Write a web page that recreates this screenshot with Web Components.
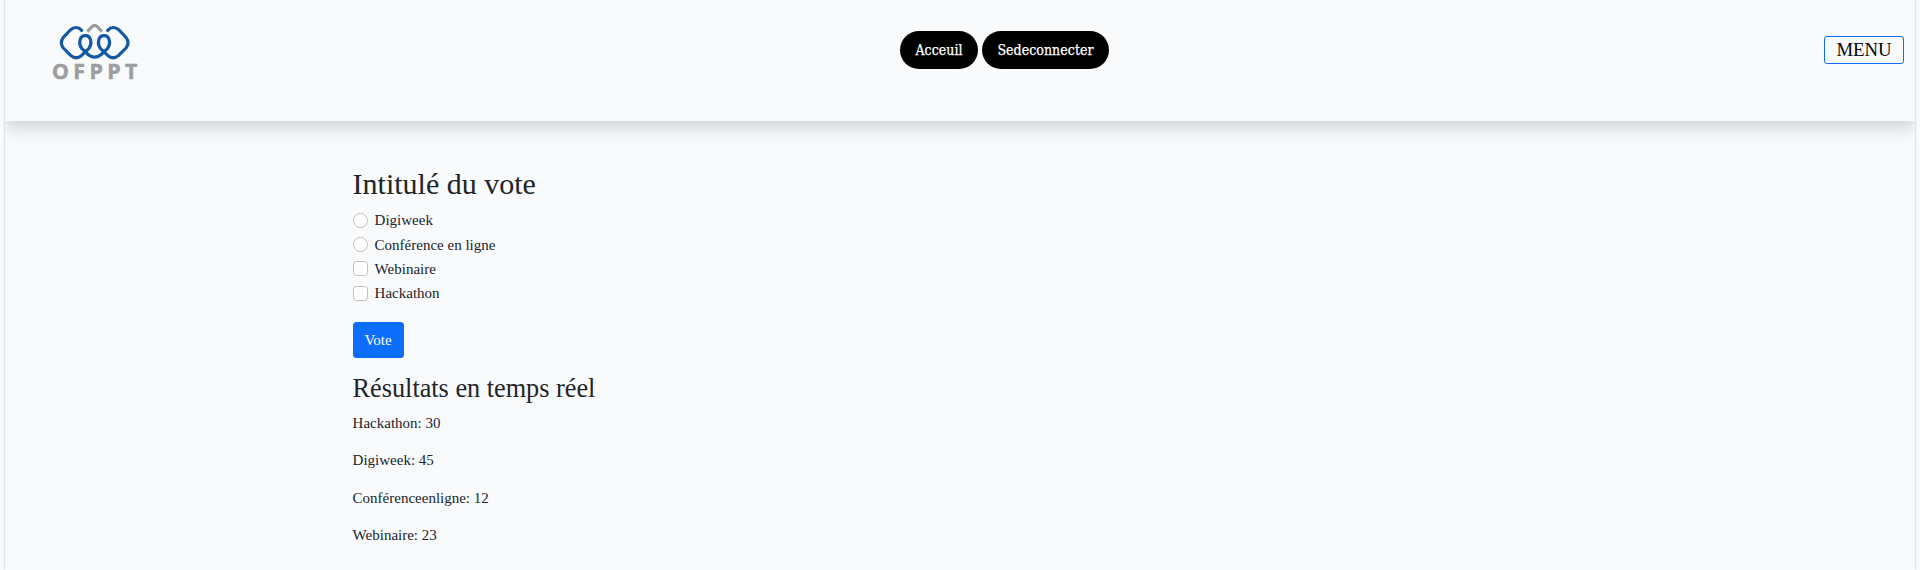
<!DOCTYPE html>
<html lang="fr">
<head>
<meta charset="utf-8">
<title>Vote</title>
<style>
html{background:#f8fafb}
body{margin:0 5px;height:570px;overflow:hidden;font:15px/24px "Liberation Serif",serif;color:#212529;background:#f8fafc;box-shadow:0 0 2px rgba(0,0,0,.3)}
</style>
</head>
<body>
<vote-page></vote-page>
<script>
const define=(name,html)=>{
  const t=document.createElement('template');t.innerHTML=html;
  customElements.define(name,class extends HTMLElement{
    constructor(){super();this.attachShadow({mode:'open'}).append(t.content.cloneNode(true));}
  });
};
define('ofppt-logo',`<style>:host{display:block;width:90px;height:64px}svg{display:block}text{font:700 64px "Open Sans",sans-serif;fill:#9c9d9f;stroke:#9c9d9f;stroke-width:1.5}</style>
<svg width="90" height="64" viewBox="150 60 270 192" fill="none" stroke-linecap="round" stroke-linejoin="round" stroke-width="9.5">
<path stroke="#9c9d9f" stroke-linecap="butt" d="M262 95L276 80Q284 72 292 80L306 95"/>
<path stroke="#1458a3" d="M245 91C235 80 221 81 211 90L190 112Q178 128 190 144L212 166Q228 180 244 167L267 145C277 132 274 107 256 107C238 107 235 132 245 145L266 165Q284 178 302 165L323 145C333 132 330 107 312 107C294 107 291 132 301 145L324 167Q340 180 356 166L378 144Q390 128 378 112L357 90C347 81 333 80 323 91"/>
<text x="156" y="238" textLength="256" lengthAdjust="spacing">OFPPT</text></svg>`);
define('nav-pill',`<style>:host{display:block}button{display:block;box-sizing:border-box;height:38px;padding:0;border:0;border-radius:19px;background:#000;color:#fff;font:14px/38px "DejaVu Serif Condensed","DejaVu Serif",serif;font-stretch:condensed;letter-spacing:.05px;-webkit-text-stroke:.25px #fff;width:100%;white-space:nowrap}</style><button><slot></slot></button>`);
define('menu-button',`<style>:host{display:block}button{display:block;box-sizing:border-box;width:80px;height:28px;padding:0;border:1px solid #0d6efd;border-radius:3px;background:transparent;color:#000;font:18.75px/26px "Liberation Serif",serif}</style><button><slot></slot></button>`);
define('site-header',`<style>:host{display:grid;grid-template-columns:850px auto 1fr;box-sizing:border-box;height:121px;padding:20px 11px 0 45px;background:#f8fafc;box-shadow:0 8px 16px rgba(0,0,0,.15)}
nav{display:flex;gap:4px;padding-top:11px}menu-button{justify-self:end;margin-top:16px}.a{width:78px}.b{width:127px}</style>
<ofppt-logo></ofppt-logo><nav><nav-pill class="a">Acceuil</nav-pill><nav-pill class="b">Sedeconnecter</nav-pill></nav><menu-button>MENU</menu-button>`);
customElements.define('vote-option',class extends HTMLElement{
  constructor(){super();const type=this.getAttribute('type');
  this.attachShadow({mode:'open'}).innerHTML=`<style>:host{display:block;height:24.4px}label{display:flex;align-items:center;gap:7px;height:24px}input{appearance:none;box-sizing:border-box;width:15px;height:15px;margin:0;border:1px solid #bfbfbf;background:#fff;border-radius:${type==='radio'?'50%':'3.5px'}}</style><label><input type="${type}" name="vote"><span><slot></slot></span></label>`;}
});
define('vote-form',`<style>:host{display:block}h2{margin:0;font-size:30px;font-weight:400;line-height:36px;padding-bottom:6.2px}
button{display:block;width:51px;height:36px;margin-top:16px;padding:0;border:0;border-radius:3.5px;background:#0d6efd;color:#fff;font:15px/34px "Liberation Serif",serif}</style>
<h2>Intitulé du vote</h2>
<vote-option type="radio">Digiweek</vote-option><vote-option type="radio">Conférence en ligne</vote-option>
<vote-option type="checkbox">Webinaire</vote-option><vote-option type="checkbox">Hackathon</vote-option><button>Vote</button>`);
define('vote-results',`<style>:host{display:block;padding-top:15px}h3{margin:0 0 6.8px;font-size:26.25px;font-weight:400;line-height:32px}p{margin:0 0 15px;line-height:22.5px}</style>
<h3>Résultats en temps réel</h3><p>Hackathon: 30</p><p>Digiweek: 45</p><p>Conférenceenligne: 12</p><p>Webinaire: 23</p>`);
define('vote-page',`<style>:host{display:block}main{padding:45px 0 0 347.6px}</style><site-header></site-header><main><vote-form></vote-form><vote-results></vote-results></main>`);
</script>
</body>
</html>
